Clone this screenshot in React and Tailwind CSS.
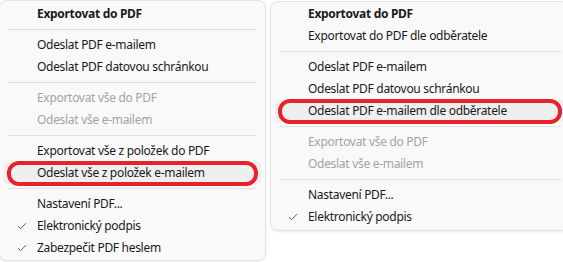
import React from "react";

const leftMenu = [
  { label: "Exportovat do PDF", bold: true },
  { sep: true },
  { label: "Odeslat PDF e-mailem" },
  { label: "Odeslat PDF datovou schránkou" },
  { sep: true },
  { label: "Exportovat vše do PDF", disabled: true },
  { label: "Odeslat vše e-mailem", disabled: true },
  { sep: true },
  { label: "Exportovat vše z položek do PDF" },
  { label: "Odeslat vše z položek e-mailem", marked: true },
  { sep: true },
  { label: "Nastavení PDF..." },
  { label: "Elektronický podpis", checked: true },
  { label: "Zabezpečit PDF heslem", checked: true },
];

const rightMenu = [
  { label: "Exportovat do PDF", bold: true },
  { label: "Exportovat do PDF dle odběratele" },
  { sep: true },
  { label: "Odeslat PDF e-mailem" },
  { label: "Odeslat PDF datovou schránkou" },
  { label: "Odeslat PDF e-mailem dle odběratele", marked: true },
  { sep: true },
  { label: "Exportovat vše do PDF", disabled: true },
  { label: "Odeslat vše e-mailem", disabled: true },
  { sep: true },
  { label: "Nastavení PDF..." },
  { label: "Elektronický podpis", checked: true },
];

const Check = () => (
  <svg width="10" height="8" viewBox="0 0 10 8" className="text-[#5c5c5c]">
    <path d="M1 4.2 L3.6 6.6 L9 1.2" fill="none" stroke="currentColor" strokeWidth="1" />
  </svg>
);

const Menu = ({ items, className }) => (
  <div
    className={`bg-[#f9f9f9] border border-[#e3e3e3] rounded-lg shadow-[0_1px_3px_rgba(0,0,0,0.08)] ${className}`}
  >
    {items.map((it, i) =>
      it.sep ? (
        <div key={i} className="h-[9px] flex items-center px-[8px]">
          <div className="h-px w-full bg-[#e0e0e0]" />
        </div>
      ) : (
        <div key={i} className="relative h-[22px] px-[4px]">
          <div
            className={`h-full flex items-center rounded-[4px] ${it.marked ? "bg-[#efefef]" : ""}`}
          >
            <div className="w-[33px] flex justify-center pl-[2px]">
              {it.checked && <Check />}
            </div>
            <span
              className={`text-[12px] tracking-[-0.3px] whitespace-nowrap ${
                it.bold ? "font-bold text-[#1a1a1a]" : it.disabled ? "text-[#a3a3a3]" : "text-[#1a1a1a]"
              }`}
            >
              {it.label}
            </span>
          </div>
          {it.marked && (
            <div className="absolute left-[7px] right-[7px] top-[-1px] bottom-[-2px] rounded-[12px] border-[4px] border-[#e8222b]" />
          )}
        </div>
      )
    )}
  </div>
);

export default function App() {
  return (
    <div
      className="w-[563px] h-[262px] bg-white overflow-hidden flex items-start gap-[4px]"
      style={{ fontFamily: '"Noto Sans", "Open Sans", sans-serif' }}
    >
      <Menu items={leftMenu} className="w-[267px] shrink-0 -ml-[1px] pt-[2px] pb-[1px]" />
      <Menu items={rightMenu} className="w-[300px] shrink-0 mt-[1px] pt-[1px] pb-[2px]" />
    </div>
  );
}
